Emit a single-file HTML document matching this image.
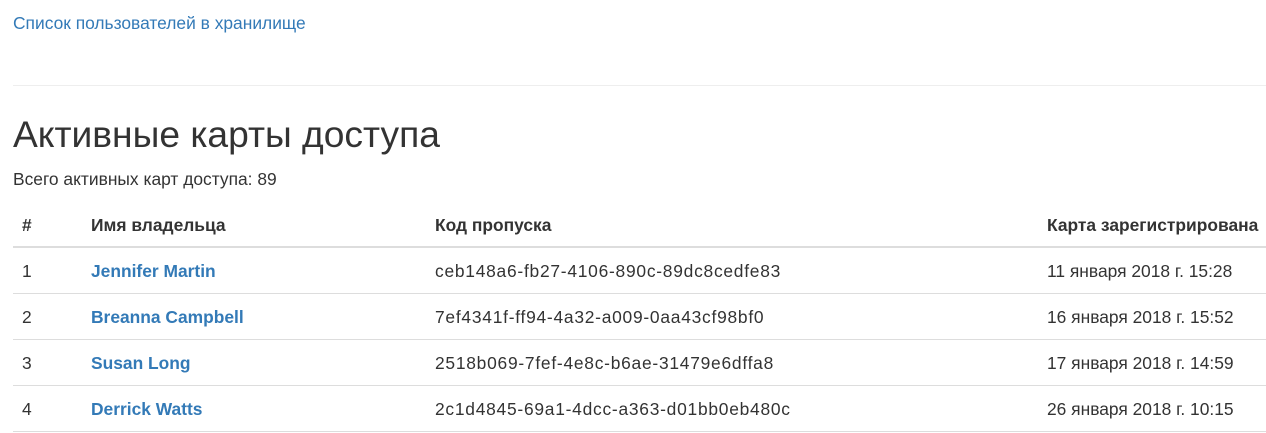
<!DOCTYPE html>
<html><head><meta charset="utf-8"><style>
body{margin:0;font-family:"Liberation Sans",Arial,sans-serif;font-size:17.4px;color:#333;width:1266px;height:433px;overflow:hidden;background:#fff}
a{color:#337ab7;text-decoration:none}
.wrap{position:absolute;left:13px;right:0;top:0}
.link{position:absolute;top:12px;left:0;line-height:22px}
hr{position:absolute;top:85px;left:0;right:0;margin:0;border:0;border-top:1px solid #eee}
h1{position:absolute;top:111px;left:0;margin:0;font-weight:500;font-size:37.2px;line-height:46px;color:#333}
.cnt{position:absolute;top:168px;left:0;line-height:22px}
table{position:absolute;top:202px;left:0;width:1253px;border-collapse:collapse;table-layout:fixed}
th,td{padding:0 0 0 9px;height:44px;text-align:left;vertical-align:middle;line-height:22px;white-space:nowrap}
th{font-weight:bold;border-bottom:2px solid #ddd;height:43px;padding-top:1px}
td{border-bottom:1px solid #ddd;padding-top:1px}
td a{font-weight:bold}
td.c{letter-spacing:0.75px}
</style></head><body><div class="wrap">
<a class="link" href="#">Список пользователей в хранилище</a>
<hr>
<h1>Активные карты доступа</h1>
<div class="cnt">Всего активных карт доступа: 89</div>
<table>
<colgroup><col style="width:69px"><col style="width:344px"><col style="width:612px"><col></colgroup>
<tr><th>#</th><th>Имя владельца</th><th>Код пропуска</th><th>Карта зарегистрирована</th></tr>
<tr><td>1</td><td><a href="#">Jennifer Martin</a></td><td class="c">ceb148a6-fb27-4106-890c-89dc8cedfe83</td><td>11 января 2018 г. 15:28</td></tr>
<tr><td>2</td><td><a href="#">Breanna Campbell</a></td><td class="c">7ef4341f-ff94-4a32-a009-0aa43cf98bf0</td><td>16 января 2018 г. 15:52</td></tr>
<tr><td>3</td><td><a href="#">Susan Long</a></td><td class="c">2518b069-7fef-4e8c-b6ae-31479e6dffa8</td><td>17 января 2018 г. 14:59</td></tr>
<tr><td>4</td><td><a href="#">Derrick Watts</a></td><td class="c">2c1d4845-69a1-4dcc-a363-d01bb0eb480c</td><td>26 января 2018 г. 10:15</td></tr>
</table>
</div></body></html>
